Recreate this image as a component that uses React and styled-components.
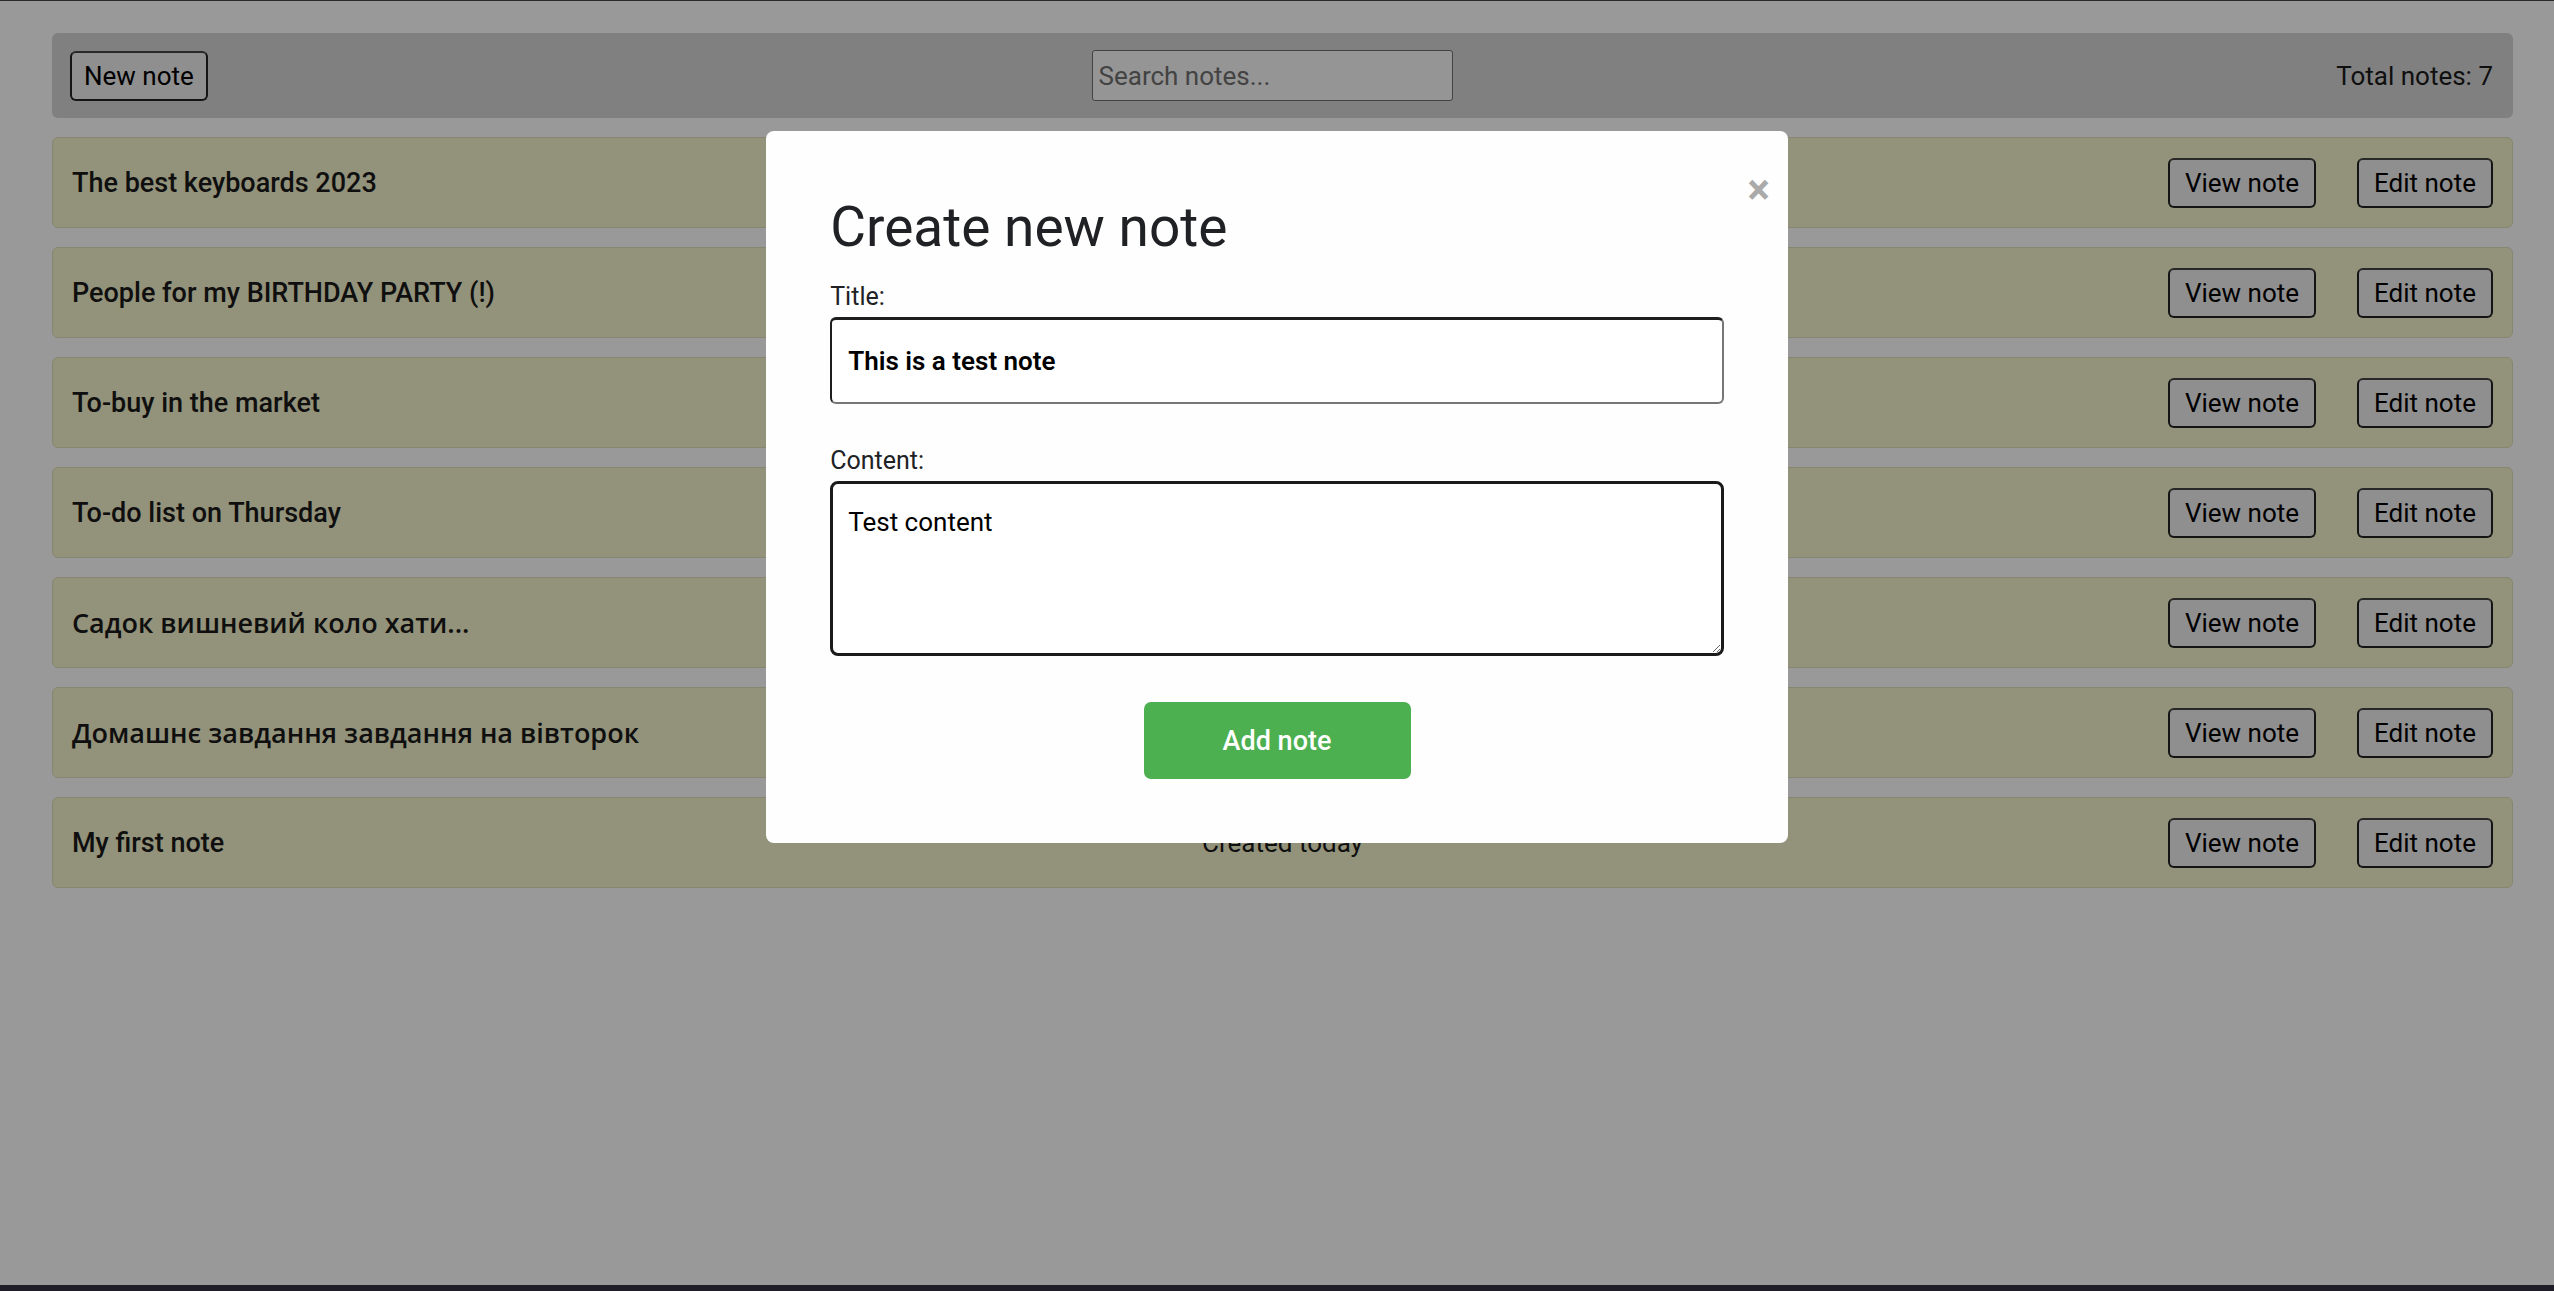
import React from 'react';
import styled, { createGlobalStyle } from 'styled-components';

const GlobalStyle = createGlobalStyle`
  * {
    box-sizing: border-box;
  }
  body {
    margin: 0;
    background: #ffffff;
    font-family: Roboto, 'Noto Sans', sans-serif;
    color: #1a1a1a;
  }
`;

const Screen = styled.div`
  min-height: 100vh;
  display: flex;
  flex-direction: column;
  border-top: 1px solid #45454d;
`;

const Page = styled.main`
  flex: 1;
  padding: 32px 41px 0 52px;
`;

const Header = styled.header`
  height: 85px;
  background: #d5d5d5;
  border-radius: 6px;
  display: flex;
  align-items: center;
  justify-content: space-between;
  padding: 0 20px 0 18px;
`;

const PlainButton = styled.button`
  font-family: inherit;
  font-size: 26px;
  color: #000;
  background: #efefef;
  border: 2px solid #222;
  border-top-color: #444;
  border-radius: 6px;
  height: 50px;
  padding: 0 ${(p) => (p.$wide ? 15 : 12)}px;
  cursor: pointer;
`;

const SearchInput = styled.input`
  width: 361px;
  height: 51px;
  font-family: inherit;
  font-size: 26px;
  padding: 0 6px;
  background: #f8f8f8;
  border: 1px solid #707070;
  border-radius: 3px;
  color: #000;
  &::placeholder {
    color: #707070;
  }
`;

const Total = styled.span`
  font-size: 26px;
  color: #1a1a1a;
`;

const NoteList = styled.ul`
  list-style: none;
  margin: 19px 0 0;
  padding: 0;
  display: flex;
  flex-direction: column;
  gap: 19px;
`;

const NoteCard = styled.li`
  height: 91px;
  display: grid;
  grid-template-columns: 1fr auto 1fr;
  align-items: center;
  padding: 0 19px 0 19px;
  background: #f5f3cb;
  border: 1px solid #e2e0bd;
  border-radius: 6px;
`;

const NoteTitle = styled.span`
  font-family: ${(p) => (p.$cyrillic ? "'Open Sans', Roboto, sans-serif" : 'inherit')};
  font-size: 27px;
  font-weight: ${(p) => (p.$cyrillic ? 600 : 500)};
  color: #1a1a1a;
`;

const NoteDate = styled.span`
  font-size: 26px;
  color: #1a1a1a;
`;

const Actions = styled.div`
  display: flex;
  justify-content: flex-end;
  gap: 41px;
`;

const Overlay = styled.div`
  position: fixed;
  inset: 0;
  background: rgba(0, 0, 0, 0.4);
  display: flex;
  justify-content: center;
  align-items: flex-start;
  padding-top: 131px;
  z-index: 10;
`;

const Modal = styled.section`
  position: relative;
  width: 40%;
  background: #fefefe;
  border-radius: 8px;
  padding: 64px;
  display: flex;
  flex-direction: column;
`;

const CloseButton = styled.span`
  position: absolute;
  top: 38px;
  right: 18px;
  font-size: 42px;
  font-weight: 700;
  line-height: 1;
  color: #aaaaaa;
  cursor: pointer;
`;

const ModalTitle = styled.h2`
  margin: 0 0 23px;
  font-size: 55px;
  font-weight: 400;
  color: #202124;
`;

const Label = styled.label`
  font-size: 25px;
  color: #202124;
  margin-bottom: 6px;
`;

const TitleInput = styled.input`
  height: 87px;
  font-family: inherit;
  font-size: 26px;
  font-weight: 600;
  color: #000;
  padding: 0 16px;
  border: 2px solid;
  border-top-width: 3px;
  border-color: #1e1e1e #767676 #767676 #1e1e1e;
  border-radius: 6px;
  margin-bottom: 42px;
`;

const ContentArea = styled.textarea`
  height: 175px;
  font-family: inherit;
  font-size: 26px;
  color: #000;
  padding: 23px 15px;
  border: 3px solid #1a1a1a;
  border-radius: 8px;
  margin-bottom: 46px;
  resize: vertical;
`;

const SubmitButton = styled.button`
  align-self: center;
  width: 267px;
  height: 77px;
  font-family: inherit;
  font-size: 27px;
  font-weight: 500;
  color: #fff;
  background: #4caf50;
  border: none;
  border-radius: 7px;
  cursor: pointer;
`;

const BottomBar = styled.div`
  position: relative;
  z-index: 20;
  height: 6px;
  background: #1e1d28;
`;

const notes = [
  'The best keyboards 2023',
  'People for my BIRTHDAY PARTY (!)',
  'To-buy in the market',
  'To-do list on Thursday',
  'Садок вишневий коло хати...',
  'Домашнє завдання завдання на вівторок',
  'My first note',
];

const isCyrillic = (text) => /[\u0400-\u04FF]/.test(text);

export default function App() {
  return (
    <>
      <GlobalStyle />
      <Screen>
        <Page>
          <Header>
            <PlainButton>New note</PlainButton>
            <SearchInput placeholder="Search notes..." />
            <Total>Total notes: {notes.length}</Total>
          </Header>
          <NoteList>
            {notes.map((title) => (
              <NoteCard key={title}>
                <NoteTitle $cyrillic={isCyrillic(title)}>{title}</NoteTitle>
                <NoteDate>Created today</NoteDate>
                <Actions>
                  <PlainButton $wide>View note</PlainButton>
                  <PlainButton $wide>Edit note</PlainButton>
                </Actions>
              </NoteCard>
            ))}
          </NoteList>
        </Page>
        <BottomBar />
      </Screen>
      <Overlay>
        <Modal>
          <CloseButton>×</CloseButton>
          <ModalTitle>Create new note</ModalTitle>
          <Label>Title:</Label>
          <TitleInput defaultValue="This is a test note" />
          <Label>Content:</Label>
          <ContentArea defaultValue="Test content" />
          <SubmitButton>Add note</SubmitButton>
        </Modal>
      </Overlay>
    </>
  );
}
